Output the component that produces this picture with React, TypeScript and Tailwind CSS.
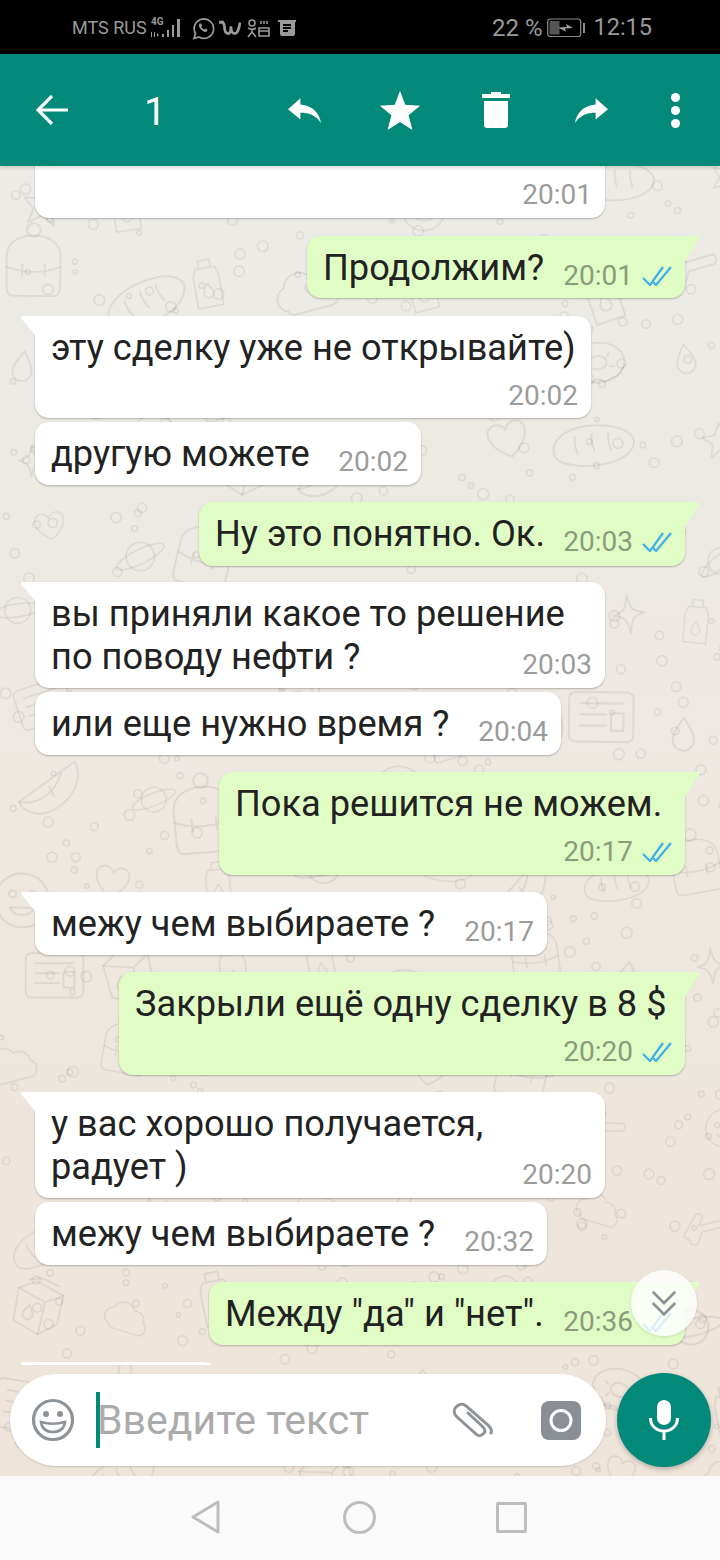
import { ReactNode } from "react";

// wallpaper doodles, jittered grid so it looks hand placed
function rng(seed: number) {
  let s = seed;
  return () => {
    s = (s * 16807) % 2147483647;
    return s / 2147483647;
  };
}

const DOODLES: ReactNode[] = [
  <path d="M0-16 5-5 17-4 8 4 11 16 0 9-11 16-8 4-17-4-5-5Z" />,
  <path d="M-20 10a10 10 0 0 1 1-19 13 13 0 0 1 24-3 11 11 0 0 1 14 11 8 8 0 0 1-3 15H-14a6 6 0 0 1-6-4Z" />,
  <g>
    <circle r="14" />
    <ellipse rx="26" ry="7" transform="rotate(-24)" />
  </g>,
  <g>
    <rect x="-26" y="-20" width="52" height="40" rx="5" />
    <path d="M-17-11H17M-17-2H4M-17 7H4" />
    <rect x="8" y="-3" width="10" height="14" />
  </g>,
  <path d="M0-14C6-5 9 0 9 5A9 9 0 0 1-9 5C-9 0-6-5 0-14Z" />,
  <g>
    <ellipse rx="24" ry="18" />
    <ellipse rx="8" ry="6" />
    <path d="M-14-4l3 2M11-8l-2 3M14 5l-3-1M-10 8l2-3M-22 4c4 10 8 4 12 10s8-2 12 2 8-2 12-2 6-4 10-10" />
  </g>,
  <path d="M0-16C2-4 4-2 13 0 4 2 2 4 0 16-2 4-4 2-13 0-4-2-2-4 0-16Z" />,
  <g>
    <path d="M-22-14-6-24 22-16V12L6 26-20 18Z" />
    <path d="M-22-14 6-6V26M6-6 22-16M-14-24-2-28 16-24" />
    <path d="M-8 0C-5 4-3 7-3 9A4 4 0 0 1-13 9C-13 7-11 4-8 0Z" />
  </g>,
  <g>
    <path d="M-18 28C-24 28-24 22-24 16V-8C-24-20-12-26 0-26S24-20 24-8V16C24 22 24 28 18 28Z" />
    <path d="M-24 2C-8 8 8 8 24 2M-10 0V10M10 0V10" />
    <circle cy="-31" r="6" />
  </g>,
  <g>
    <path d="M-32 10C-36-2-22-16 4-18 26-20 38-12 34-2 30 10 8 18-12 18-24 18-30 16-32 10Z" />
    <path d="M-16-6C-16 0-14 4-12 8M-2-10C-2-4 0 0 2 4M12-12C12-6 14-2 16 2" />
  </g>,
  <path d="M0 16C-20 4-18-12-8-12-4-12-1-9 0-6 1-9 4-12 8-12 18-12 20 4 0 16Z" />,
  <g>
    <path d="M-10-14H10L13-6V26H-13V-6ZM-6-22H6V-14H-6Z" />
    <path d="M0 2C4 8 5 10 5 12A5 5 0 0 1-5 12C-5 10-4 8 0 2Z" />
  </g>,
  <g>
    <circle r="22" />
    <circle cx="-8" cy="-5" r="3" />
    <circle cx="8" cy="-5" r="3" />
    <path d="M-10 6C-6 14 6 14 10 6Z" />
  </g>,
  <g>
    <path d="M-24 18 18-26C26-18 28 6 4 22-6 28-20 26-24 18Z" />
    <path d="M-24 18C-8 18 6 6 8-14M0 0 6 8" />
  </g>,
  <path d="M-22 4 -4-16C0-20 6-16 4-12L-2-4H22C26-4 26 4 22 4H0L-6 14C-10 20-18 14-16 10Z" />,
];

function Wallpaper() {
  const rand = rng(4711);
  const shapes: { kind: number; x: number; y: number; r: number; size: number }[] = [];
  const dots: { x: number; y: number; r: number }[] = [];
  for (let row = 0; row < 16; row++) {
    for (let col = 0; col < 8; col++) {
      shapes.push({
        kind: Math.floor(rand() * DOODLES.length),
        x: col * 96 + 10 + rand() * 50,
        y: row * 86 + 10 + rand() * 44,
        r: rand() * 40 - 20,
        size: 0.85 + rand() * 0.4,
      });
      for (let d = 0; d < 5; d++) {
        dots.push({ x: col * 96 + rand() * 96, y: row * 86 + rand() * 86, r: 2 + rand() * 3.5 });
      }
    }
  }
  return (
    <svg className="absolute inset-0 h-full w-full" fill="none" stroke="#000" strokeOpacity="0.065" strokeWidth="1.7" strokeLinejoin="round" strokeLinecap="round">
      {shapes.map((s, i) => (
        <g key={i} transform={`translate(${s.x} ${s.y}) rotate(${s.r}) scale(${s.size})`}>
          {DOODLES[s.kind]}
        </g>
      ))}
      {dots.map((d, i) => (
        <circle key={i} cx={d.x} cy={d.y} r={d.r} />
      ))}
    </svg>
  );
}

function Checks() {
  return (
    <svg viewBox="0 0 30 20" className="ml-[9px] h-5 w-[30px] shrink-0" fill="none" stroke="#45afe8" strokeWidth="2.3">
      <path d="M1 12 8 19 21 1" />
      <path d="M11 16 14 19 29 1" />
    </svg>
  );
}

function Stamp({ time, out }: { time: string; out?: boolean }) {
  return (
    <span className="flex shrink-0 items-center">
      <span className={`shrink-0 text-[28px] leading-[26px] ${out ? "text-[#8b9c7d]" : "text-[#9c9c9c]"}`}>{time}</span>
      {out ? <Checks /> : null}
    </span>
  );
}

function TailIn() {
  return (
    <svg viewBox="0 0 16 20" className="absolute top-0 left-[-14px] h-5 w-4" fill="#fff">
      <path d="M1 0H16V20H15L0 2Q0 0 1 0Z" />
    </svg>
  );
}

function TailOut() {
  return (
    <svg viewBox="0 0 16 24" className="absolute top-0 right-[-15px] h-6 w-4" fill="#e1fdc6">
      <path d="M0 0H14Q16 0 15 2L2 24H0Z" />
    </svg>
  );
}

type BubbleProps = { out?: boolean; tail?: boolean; className: string; children: ReactNode };

function Bubble({ out, tail, className, children }: BubbleProps) {
  const side = out ? "mr-[35px] self-end rounded-tl-[14px] bg-[#e1fdc6]" : "ml-[35px] self-start rounded-tr-[14px] bg-white";
  const corner = tail ? "" : out ? "rounded-tr-[14px]" : "rounded-tl-[14px]";
  return (
    <div className={`relative shrink-0 rounded-b-[14px] pt-[10px] pr-[13px] pb-[10px] pl-[16px] text-[36.2px] leading-[43px] text-[#222] shadow-[0_1px_2px_rgba(0,0,0,0.25)] ${side} ${corner} ${className}`}>
      {tail ? out ? <TailOut /> : <TailIn /> : null}
      {children}
    </div>
  );
}

// text with the time on the same line
function Inline({ text, time, out }: { text: string; time: string; out?: boolean }) {
  return (
    <div className="flex items-end justify-between whitespace-nowrap">
      <span>{text}</span>
      <Stamp time={time} out={out} />
    </div>
  );
}

// text with the time on a row of its own
function Stacked({ text, time, out }: { text: string; time: string; out?: boolean }) {
  return (
    <>
      <div className="whitespace-nowrap">{text}</div>
      <div className="flex h-10 items-end justify-end">
        <Stamp time={time} out={out} />
      </div>
    </>
  );
}

function Messages() {
  return (
    <div className="flex flex-1 flex-col overflow-hidden">
      <Bubble className="mt-[-51px] w-[570px]">
        <Stacked text={"\u00a0"} time="20:01" />
      </Bubble>
      <Bubble out tail className="mt-[18px] h-[62px] w-[378px]">
        <Inline out text="Продолжим?" time="20:01" />
      </Bubble>
      <Bubble tail className="mt-[18px] h-[102px] w-[556px]">
        <Stacked text="эту сделку уже не открывайте)" time="20:02" />
      </Bubble>
      <Bubble className="mt-1 w-[386px]">
        <Inline text="другую можете" time="20:02" />
      </Bubble>
      <Bubble out tail className="mt-[17px] h-[64px] w-[486px]">
        <Inline out text="Ну это понятно. Ок." time="20:03" />
      </Bubble>
      <Bubble tail className="mt-4 w-[570px]">
        <div className="whitespace-nowrap">вы приняли какое то решение</div>
        <Inline text="по поводу нефти ?" time="20:03" />
      </Bubble>
      <Bubble className="mt-1 w-[526px]">
        <Inline text="или еще нужно время ?" time="20:04" />
      </Bubble>
      <Bubble out tail className="mt-[17px] w-[466px]">
        <Stacked out text="Пока решится не можем." time="20:17" />
      </Bubble>
      <Bubble tail className="mt-[17px] w-[512px]">
        <Inline text="межу чем выбираете ?" time="20:17" />
      </Bubble>
      <Bubble out tail className="mt-[17px] w-[566px]">
        <Stacked out text="Закрыли ещё одну сделку в 8 $" time="20:20" />
      </Bubble>
      <Bubble tail className="mt-[17px] w-[570px]">
        <div className="whitespace-nowrap">у вас хорошо получается,</div>
        <Inline text="радует )" time="20:20" />
      </Bubble>
      <Bubble className="mt-1 w-[512px]">
        <Inline text="межу чем выбираете ?" time="20:32" />
      </Bubble>
      <Bubble out tail className="mt-[17px] w-[476px]">
        <Inline out text={'Между "да" и "нет".'} time="20:36" />
      </Bubble>
      <Bubble tail className="mt-[17px] h-[63px] w-[183px]">
        {"\u00a0"}
      </Bubble>
    </div>
  );
}

function StatusBar() {
  return (
    <div className="flex h-[54px] shrink-0 items-center justify-between bg-black pt-[2px] pr-[68px] pl-[72px] text-[#9a9a9a]">
      <div className="flex items-center">
        <span className="text-[18px] leading-none">MTS RUS</span>
        <svg viewBox="0 0 34 24" className="ml-[2px] h-6 w-[34px]" fill="currentColor">
          <text x="2" y="9" fontSize="10" fontWeight="700" fontFamily="Roboto">
            4G
          </text>
          <path d="M2 16h1v5H2zM5 16h1v5H5zM8 17l2 2-2 2zM13 18h2v3h-2zM18 14h2v7h-2zM23 9h2v12h-2zM28 3h3v18h-3z" />
        </svg>
        <svg viewBox="0 0 24 24" className="ml-2 h-6 w-6" fill="none" stroke="currentColor" strokeWidth="1.7">
          <path d="M3 22.500 4.500 17.500A9.700 9.700 0 1 1 8 21Z" />
          <path fill="currentColor" stroke="none" d="M9 7.500c-1 .6-1.300 2-.7 3.600 1 2.200 2.700 3.800 4.800 4.600 1.500.5 2.700 0 3.300-1.200l-.2-1-2-1-1 1.100c-1.300-.5-2.400-1.600-3-3l1-1-.9-2.200Z" />
        </svg>
        <svg viewBox="0 0 24 16" className="ml-1 h-4 w-[22px]" fill="none" stroke="currentColor" strokeWidth="3">
          <path d="M0 2 4 1.500C5 3 6 4 6 7 6 12 8 14 10 14 13 14 13 9 13 6 13 9 14 14 17 14 21 14 22 7 23 2" />
        </svg>
        <svg viewBox="0 0 24 20" className="ml-[6px] h-5 w-6" fill="none" stroke="currentColor" strokeWidth="1.6">
          <circle cx="5" cy="5" r="3" />
          <path d="M1 10c3 2 5 2 8 0M5 11v3M1 19l4-5 4 5" />
          <path d="M12 10h10v8H12zM12 13h10M14 3v3M17 3v3M20 3v3" />
        </svg>
        <svg viewBox="0 0 18 16" className="ml-[7px] h-4 w-[18px]" fill="currentColor">
          <path d="M0 0h18v2h-1v12l-1 2H3l-1-2V2H0ZM5 4v2h8V4Zm0 3v2h8V7Zm0 3v2h5v-2Z" fillRule="evenodd" />
        </svg>
      </div>
      <div className="flex items-center">
        <span className="text-[24px] leading-none">22 %</span>
        <svg viewBox="0 0 38 20" className="ml-[5px] h-5 w-[38px]" fill="none">
          <rect x="0.700" y="1" width="33" height="17.500" rx="2.500" stroke="#8a8a8a" strokeWidth="1.200" />
          <rect x="2.500" y="3" width="10" height="13.500" fill="#555" />
          <path d="M11 9.500 20 9l-1-3 7 4-8 .5 1 3-8-4Z" fill="#a5a5a5" />
          <rect x="36" y="5" width="2" height="10" fill="#8a8a8a" />
        </svg>
        <span className="ml-2 text-[23.500px] leading-none">12:15</span>
      </div>
    </div>
  );
}

function ActionBar() {
  return (
    <div className="relative z-10 flex h-[112px] shrink-0 items-center bg-[#02897a] text-white shadow-[0_2px_4px_rgba(0,0,0,0.15)]">
      <svg viewBox="0 0 32 30" className="ml-[36px] h-[30px] w-8" fill="none" stroke="currentColor" strokeWidth="3.200">
        <path d="M16 1 2 15 16 29M2 15H32" />
      </svg>
      <span className="mt-[5px] ml-[76px] w-[18px] text-[39px] leading-none">1</span>
      <svg viewBox="0 0 24 18" className="ml-[126px] h-[25px] w-[33px]" fill="currentColor">
        <path d="M9 4.600V0L0 8l9 7.500v-4.800c6 0 11 1.600 15 7.300C23 11 18 5.500 9 4.600Z" />
      </svg>
      <svg viewBox="0 0 24 24" className="ml-[58px] h-[42px] w-[42px]" fill="currentColor">
        <path d="M12 1l3 8 8.500 .6-6.600 5.400 2.200 8.400L12 18.800 4.900 23.400 7.100 15 .5 9.600 9 9Z" />
      </svg>
      <svg viewBox="0 0 28 36" className="ml-[61px] h-9 w-7" fill="currentColor">
        <path d="M9 0h10v2h9v4H0V2h9ZM2 9h24v24a3 3 0 0 1-3 3H5a3 3 0 0 1-3-3Z" />
      </svg>
      <svg viewBox="0 0 24 18" className="ml-[65px] h-[25px] w-[33px] -scale-x-100" fill="currentColor">
        <path d="M9 4.600V0L0 8l9 7.500v-4.800c6 0 11 1.600 15 7.300C23 11 18 5.500 9 4.600Z" />
      </svg>
      <div className="ml-[63px] flex flex-col gap-[4px]">
        <span className="h-[9px] w-[9px] rounded-full bg-white" />
        <span className="h-[9px] w-[9px] rounded-full bg-white" />
        <span className="h-[9px] w-[9px] rounded-full bg-white" />
      </div>
    </div>
  );
}

function Composer() {
  return (
    <div className="flex shrink-0 items-center pt-2 pr-[9px] pb-[9px] pl-[10px]">
      <div className="flex h-[92px] w-[596px] items-center rounded-full bg-white pr-[25px] shadow-[0_1px_2px_rgba(0,0,0,0.15)]">
        <svg viewBox="0 0 44 44" className="ml-[21px] h-11 w-11 shrink-0" fill="none" stroke="#8e9398" strokeWidth="3.200">
          <circle cx="22" cy="22" r="19.500" />
          <circle cx="15" cy="16" r="3" fill="#8e9398" stroke="none" />
          <circle cx="29" cy="16" r="3" fill="#8e9398" stroke="none" />
          <path d="M10 24c7 2 17 2 24 0-1 7-6 10-12 10s-11-3-12-10Z" strokeWidth="2.600" />
        </svg>
        <span className="ml-[21px] h-14 w-1 shrink-0 bg-[#02897a]" />
        <span className="ml-[-3px] whitespace-nowrap text-[41px] leading-none text-[#ababab]">Введите текст</span>
        <svg viewBox="0 0 42 36" className="ml-auto h-9 w-[42px] shrink-0" fill="none" stroke="#8e9398" strokeWidth="3" strokeLinecap="round">
          <path d="M16 11 31 25C34 28 33 31 31 32 29 34 26 34 24 32L5 15C1 11 2 7 4 5 7 2 11 1 14 4L36 23C39 26 40 29 39 31" />
        </svg>
        <svg viewBox="0 0 40 39" className="ml-[47px] h-[39px] w-10 shrink-0">
          <rect width="40" height="39" rx="8" fill="#8a8f95" />
          <circle cx="20" cy="19.500" r="10" fill="none" stroke="#fff" strokeWidth="3" />
        </svg>
      </div>
      <div className="ml-[11px] flex h-[94px] w-[94px] shrink-0 items-center justify-center rounded-full bg-[#02897a] shadow-[0_2px_5px_rgba(0,0,0,0.25)]">
        <svg viewBox="0 0 30 40" className="h-10 w-[30px]" fill="none" stroke="#fff">
          <rect x="8" y="0" width="14" height="25" rx="7" fill="#fff" stroke="none" />
          <path d="M1.500 18c0 8 6 13 13.500 13s13.500-5 13.500-13M15 31v9" strokeWidth="3" />
        </svg>
      </div>
    </div>
  );
}

function NavBar() {
  return (
    <div className="flex h-[84px] shrink-0 items-center bg-[#fafafa] pb-[2px]">
      <svg viewBox="0 0 30 34" className="ml-[191px] h-[34px] w-[30px]" fill="none" stroke="#bdbdbd" strokeWidth="3" strokeLinejoin="round">
        <path d="M27 2V32L2 17Z" />
      </svg>
      <span className="ml-[122px] h-[33px] w-[33px] rounded-full border-[3px] border-[#bdbdbd]" />
      <span className="ml-[120px] h-[31px] w-[31px] rounded-[2px] border-[3px] border-[#bdbdbd]" />
    </div>
  );
}

export default function App() {
  return (
    <div className="flex h-[1560px] w-[720px] flex-col overflow-hidden font-['Roboto','Noto_Sans',sans-serif]">
      <StatusBar />
      <ActionBar />
      <div className="relative flex min-h-0 flex-1 flex-col bg-gradient-to-b from-[#ecebe6] to-[#eee4da]">
        <Wallpaper />
        <div className="relative flex min-h-0 flex-1 flex-col">
          <Messages />
          <Composer />
        </div>
        {/* jump to bottom button, sits over the last bubble */}
        <div className="absolute top-[1104px] left-[631px] flex h-[66px] w-[66px] items-center justify-center rounded-full bg-white/80 shadow-[0_1px_3px_rgba(0,0,0,0.12)]">
          <svg viewBox="0 0 24 24" className="h-[34px] w-[30px]" fill="none" stroke="#8e9398" strokeWidth="2.200">
            <path d="M3 3l9 9 9-9M3 12l9 9 9-9" />
          </svg>
        </div>
      </div>
      <NavBar />
    </div>
  );
}
